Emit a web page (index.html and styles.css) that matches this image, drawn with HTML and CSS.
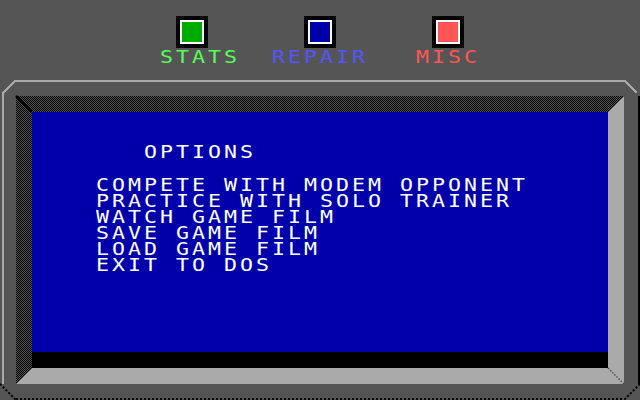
FILE: index.html
```html
<!DOCTYPE html>
<html>
<head>
<meta charset="utf-8">
<title>Options</title>
<link rel="stylesheet" href="styles.css">
</head>
<body>
<div class="app">
  <header class="tabs">
    <div class="tab tab-stats">
      <div class="icon"><div class="fill fill-green"></div></div>
      <div class="label label-green">STATS</div>
    </div>
    <div class="tab tab-repair">
      <div class="icon"><div class="fill fill-blue"></div></div>
      <div class="label label-blue">REPAIR</div>
    </div>
    <div class="tab tab-misc">
      <div class="icon"><div class="fill fill-red"></div></div>
      <div class="label label-red">MISC</div>
    </div>
  </header>
  <main class="frame">
    <svg class="frame-art" viewBox="0 0 640 320" width="640" height="320" shape-rendering="crispEdges">
      <defs>
        <pattern id="chk" width="2" height="2" patternUnits="userSpaceOnUse">
          <rect width="2" height="2" fill="#555555"/>
          <rect x="0" y="0" width="1" height="1" fill="#000"/>
          <rect x="1" y="1" width="1" height="1" fill="#000"/>
        </pattern>
        <pattern id="dots" width="4" height="2" patternUnits="userSpaceOnUse">
          <rect width="2" height="2" fill="#000"/>
        </pattern>
      </defs>
      <polyline points="3,304 3,13 15,1 625,1 637,13" fill="none" stroke="#aaaaaa" stroke-width="2"/>
      <rect x="638" y="16" width="2" height="288" fill="#000"/>
      <rect x="16" y="16" width="608" height="288" fill="url(#chk)"/>
      <polygon points="608,32 624,16 624,304 608,288" fill="#aaaaaa"/>
      <polygon points="32,288 608,288 624,304 16,304" fill="#aaaaaa"/>
      <line x1="608" y1="288" x2="624" y2="304" stroke="#555555" stroke-width="1.5" stroke-dasharray="1.5 1.5" shape-rendering="auto"/>
      <rect x="32" y="272" width="576" height="16" fill="#000"/>
      <line x1="16" y1="16" x2="32" y2="32" stroke="#000" stroke-width="2.5" shape-rendering="auto"/>
      <rect x="16" y="318" width="608" height="2" fill="url(#dots)"/>
      <line x1="0" y1="304" x2="16" y2="320" stroke="#000" stroke-width="2" stroke-dasharray="2 2" shape-rendering="auto"/>
      <line x1="640" y1="304" x2="624" y2="320" stroke="#000" stroke-width="2" stroke-dasharray="2 2" shape-rendering="auto"/>
    </svg>
    <section class="screen">
      <div class="title">OPTIONS</div>
      <ul class="menu">
        <li>COMPETE WITH MODEM OPPONENT</li>
        <li>PRACTICE WITH SOLO TRAINER</li>
        <li>WATCH GAME FILM</li>
        <li>SAVE GAME FILM</li>
        <li>LOAD GAME FILM</li>
        <li>EXIT TO DOS</li>
      </ul>
    </section>
  </main>
</div>
</body>
</html>
```
FILE: styles.css
```css
html, body {
  margin: 0;
  padding: 0;
  background: #555555;
}

.app {
  width: 640px;
  height: 400px;
  overflow: hidden;
  display: flex;
  flex-direction: column;
}

.tabs {
  height: 80px;
  box-sizing: border-box;
  display: flex;
  padding-top: 16px;
  padding-left: 160px;
}

.tab {
  display: flex;
  flex-direction: column;
  align-items: flex-start;
}

.tab-stats { width: 80px; }
.tab-repair { width: 96px; margin-left: 32px; }
.tab-misc { width: 64px; margin-left: 48px; }

.icon {
  border: 2px solid #ffffff;
  box-shadow: 0 0 0 4px #000000;
  margin: 4px 0 4px 20px;
}

.tab-repair .icon { margin-left: 36px; }

.fill {
  width: 20px;
  height: 20px;
}

.fill-green { background: #00aa00; }
.fill-blue { background: #0000aa; }
.fill-red { background: #ff5555; }

.label,
.title,
.menu li {
  font-family: "DejaVu Sans Mono", monospace;
  font-weight: normal;
  font-size: 18px;
  line-height: 16px;
  height: 16px;
  letter-spacing: 2.495px;
  transform: scaleX(1.2);
  transform-origin: 0 0;
  white-space: pre;
}

.label { margin-top: 1px; }
.label-green { color: #55ff55; }
.label-blue { color: #5555ff; }
.label-red { color: #ff5555; }

.frame {
  display: grid;
  width: 640px;
  height: 320px;
}

.frame-art {
  grid-area: 1 / 1;
  display: block;
}

.screen {
  grid-area: 1 / 1;
  align-self: start;
  justify-self: start;
  width: 576px;
  height: 240px;
  margin: 32px 0 0 32px;
  background: #0000aa;
  color: #ffffff;
  display: flex;
  flex-direction: column;
}

.title {
  margin: 32px 0 0 112px;
}

.menu {
  list-style: none;
  margin: 17px 0 0 64px;
  padding: 0;
}
```
